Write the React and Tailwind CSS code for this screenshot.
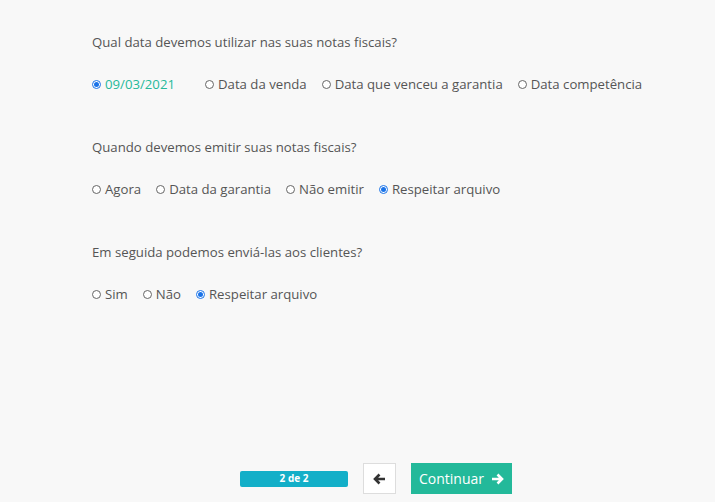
import React from 'react';
import { useState } from 'react';

function Radio({ label, checked, onChange, highlight }) {
  return (
    <label className="flex items-center gap-[4px] cursor-pointer" onClick={onChange}>
      <span
        className={
          'w-[9px] h-[9px] rounded-full border flex items-center justify-center ' +
          (checked ? 'border-[#1a73e8] bg-white' : 'border-[#666] bg-white')
        }
      >
        {checked && <span className="w-[5px] h-[5px] rounded-full bg-[#1a73e8]" />}
      </span>
      <span className={checked && highlight ? 'text-[#26b99a]' : ''}>{label}</span>
    </label>
  );
}

function Question({ title, options, value, onChange, highlight, firstGap }) {
  return (
    <div>
      <p className="h-[20px] leading-[20px]">{title}</p>
      <div className="flex items-center gap-[15px] mt-[23px] h-[20px]">
        {options.map((opt, i) => (
          <div key={opt} className={i === 0 && firstGap ? 'mr-[15px]' : ''}>
            <Radio
              label={opt}
              checked={value === opt}
              onChange={() => onChange(opt)}
              highlight={highlight}
            />
          </div>
        ))}
      </div>
    </div>
  );
}

export default function App() {
  const [data, setData] = useState('09/03/2021');
  const [quando, setQuando] = useState('Respeitar arquivo');
  const [enviar, setEnviar] = useState('Respeitar arquivo');

  return (
    <div
      className="w-[715px] h-[502px] bg-[#f8f8f8] text-[#555] text-[13.2px] flex flex-col"
      style={{ fontFamily: '"Open Sans", sans-serif' }}
    >
      <div className="flex flex-col gap-[42px] pl-[92px] pt-[32px] flex-1">
        <Question
          title="Qual data devemos utilizar nas suas notas fiscais?"
          options={['09/03/2021', 'Data da venda', 'Data que venceu a garantia', 'Data competência']}
          value={data}
          onChange={setData}
          highlight
          firstGap
        />
        <Question
          title="Quando devemos emitir suas notas fiscais?"
          options={['Agora', 'Data da garantia', 'Não emitir', 'Respeitar arquivo']}
          value={quando}
          onChange={setQuando}
        />
        <Question
          title="Em seguida podemos enviá-las aos clientes?"
          options={['Sim', 'Não', 'Respeitar arquivo']}
          value={enviar}
          onChange={setEnviar}
        />
      </div>
      <div className="flex items-center justify-center gap-[15px] pb-[8px] pl-[37px]">
        <div className="w-[108px] h-[16px] rounded-[2px] bg-[#13afc8] text-white text-[10px] font-bold flex items-center justify-center">
          2 de 2
        </div>
        <button className="w-[33px] h-[31px] bg-white border border-[#ddd] flex items-center justify-center text-[#333]">
          <svg width="13" height="12" viewBox="0 0 13 12">
            <path d="M12 6H3M6.5 1.5L2 6l4.5 4.5" fill="none" stroke="currentColor" strokeWidth="2.6" />
          </svg>
        </button>
        <button className="w-[101px] h-[31px] bg-[#23b99a] text-white text-[14px] font-medium flex items-center justify-center gap-[7px]">
          Continuar
          <svg width="13" height="12" viewBox="0 0 13 12">
            <path d="M1 6h9M6.5 1.5L11 6l-4.5 4.5" fill="none" stroke="currentColor" strokeWidth="2.6" />
          </svg>
        </button>
      </div>
    </div>
  );
}
